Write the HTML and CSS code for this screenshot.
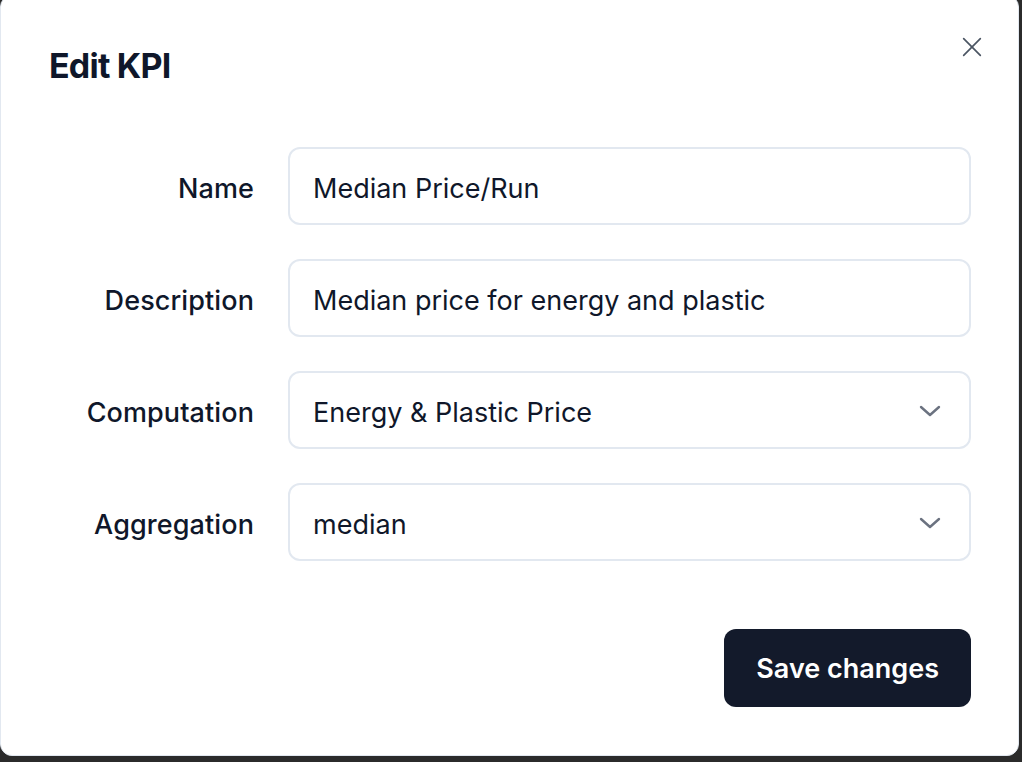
FILE: index.html
```html
<!DOCTYPE html>
<html lang="en">
<head>
<meta charset="utf-8">
<title>Edit KPI</title>
<link rel="stylesheet" href="styles.css">
</head>
<body>
<div class="dialog" role="dialog">
  <button class="close" aria-label="Close">
    <svg width="24" height="24" viewBox="0 0 24 24" fill="none" stroke="currentColor" stroke-width="2" stroke-linecap="round" stroke-linejoin="round"><path d="M2 2 22 22"/><path d="M22 2 2 22"/></svg>
  </button>
  <h2 class="title">Edit KPI</h2>
  <div class="form">
    <label class="label">Name</label>
    <div class="field">Median Price/Run</div>
    <label class="label">Description</label>
    <div class="field">Median price for energy and plastic</div>
    <label class="label">Computation</label>
    <div class="field select"><span>Energy &amp; Plastic Price</span>
      <svg class="chev" width="22" height="12" viewBox="0 0 22 12" fill="none" stroke="currentColor" stroke-width="2.4" stroke-linecap="round" stroke-linejoin="round"><path d="M2 2 11 10 20 2"/></svg>
    </div>
    <label class="label">Aggregation</label>
    <div class="field select"><span>median</span>
      <svg class="chev" width="22" height="12" viewBox="0 0 22 12" fill="none" stroke="currentColor" stroke-width="2.4" stroke-linecap="round" stroke-linejoin="round"><path d="M2 2 11 10 20 2"/></svg>
    </div>
  </div>
  <div class="footer">
    <button class="save">Save changes</button>
  </div>
</div>
</body>
</html>
```

FILE: styles.css
```css
html, body {
  margin: 0;
  padding: 0;
  background: #2b2b2b;
  height: 100%;
  overflow: hidden;
}
body {
  font-family: Inter, "Noto Sans", sans-serif;
  color: #0f172a;
}
.dialog {
  position: relative;
  box-sizing: border-box;
  width: 1019px;
  height: 761px;
  margin-top: -5px;
  background: #ffffff;
  border: 1px solid #e2e8f0;
  border-radius: 12px;
  padding: 53px 47px 48px 48px;
  display: flex;
  flex-direction: column;
}
.close {
  position: absolute;
  top: 39px;
  right: 34px;
  width: 24px;
  height: 24px;
  padding: 0;
  border: 0;
  background: transparent;
  color: #4b5563;
  display: flex;
}
.close svg { width: 20px; height: 20px; margin: 2px; }
.title {
  margin: 0;
  font-size: 34px;
  line-height: 34px;
  font-weight: 700;
  letter-spacing: -0.8px;
  color: #0f172a;
}
.form {
  margin-top: 64px;
  display: grid;
  grid-template-columns: 205px 1fr;
  column-gap: 34px;
  row-gap: 34px;
  align-items: center;
}
.label {
  text-align: right;
  font-size: 27px;
  font-weight: 500;
  color: #0f172a;
  padding-top: 4px;
  letter-spacing: 0.1px;
}
.field {
  box-sizing: border-box;
  height: 78px;
  border: 2px solid #e2e8f0;
  border-radius: 12px;
  padding: 4px 24px 0 23px;
  display: flex;
  align-items: center;
  justify-content: space-between;
  font-size: 27px;
  color: #0f172a;
}
.chev {
  color: #6b7280;
  margin-right: 4px;
  margin-top: -2px;
}
.footer {
  margin-top: auto;
  display: flex;
  justify-content: flex-end;
}
.save {
  height: 78px;
  padding: 0 32px;
  border: 0;
  border-radius: 12px;
  background: #131a2b;
  color: #ffffff;
  font-family: Inter, "Noto Sans", sans-serif;
  font-size: 27px;
  font-weight: 600;
}
```
